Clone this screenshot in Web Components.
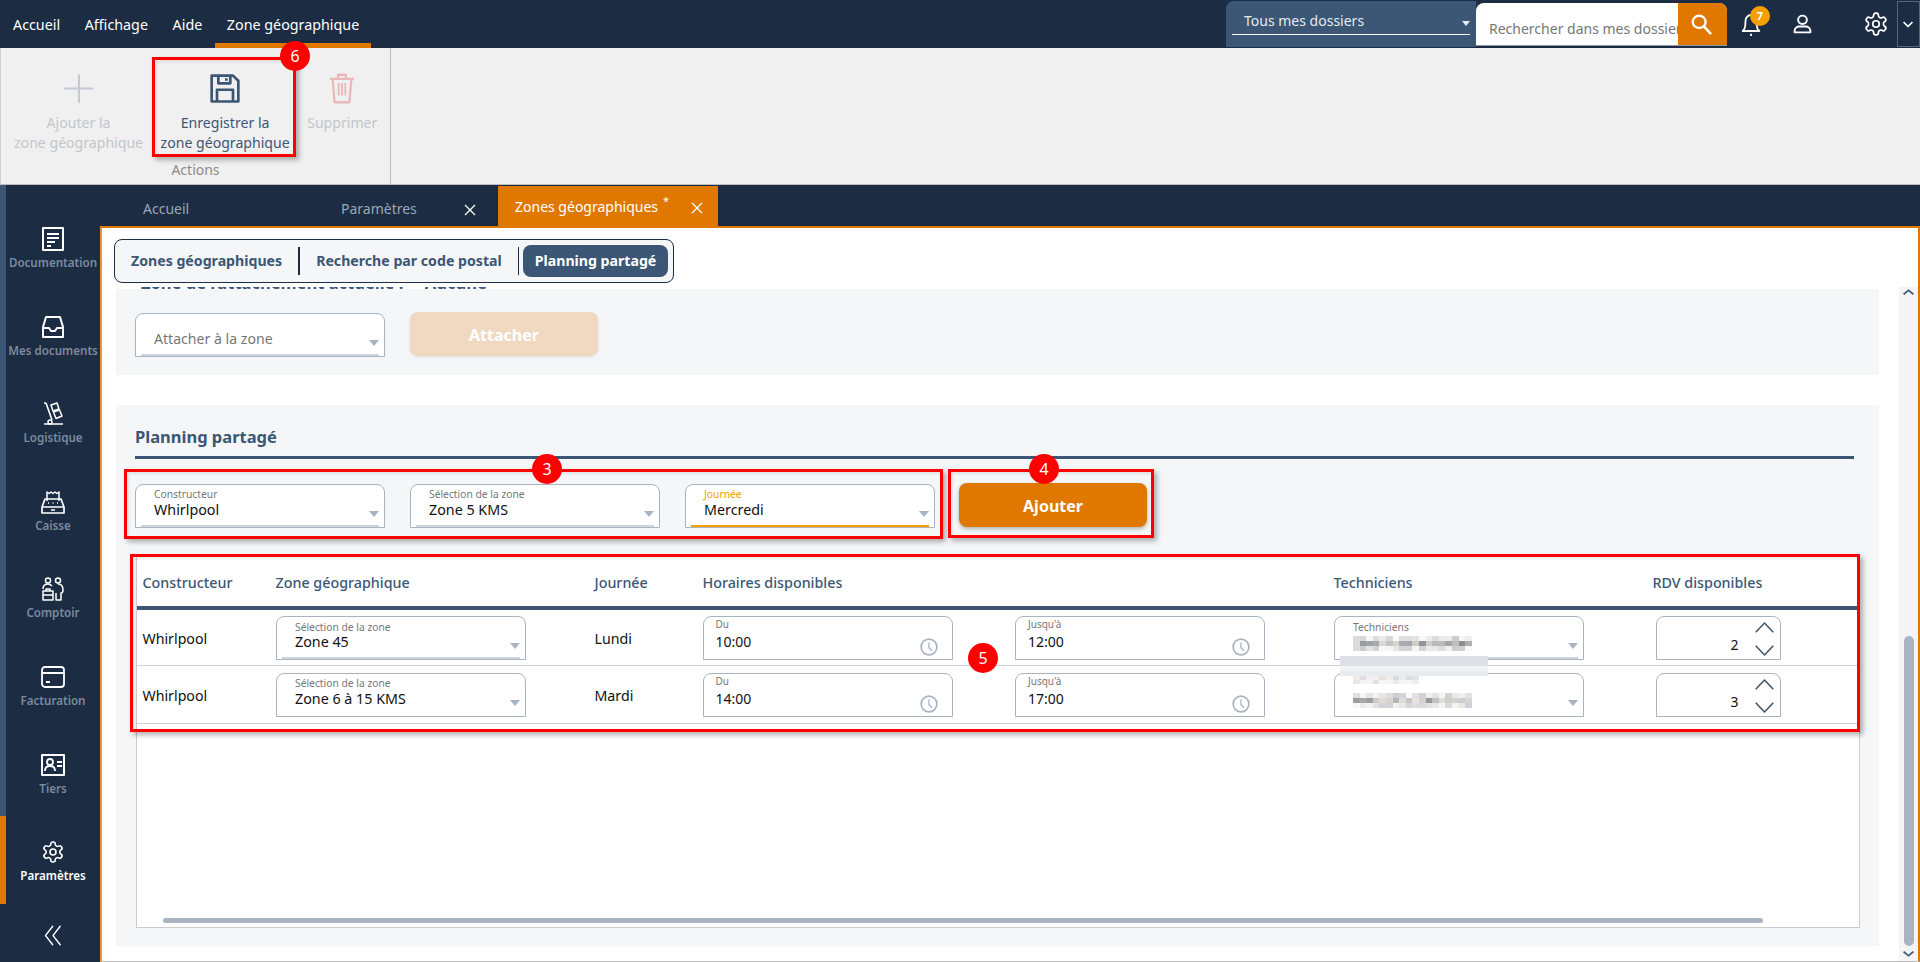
<!doctype html>
<html lang="fr">
<head>
<meta charset="utf-8">
<title>Zones géographiques</title>
<style>
  html, body { margin: 0; height: 100%; background: #fff; overflow: hidden; }
  body { font: 14px "Noto Sans", "Open Sans", sans-serif; color: #111; }
</style>
</head>
<body>
<app-shell>
  <app-topbar></app-topbar>
  <app-ribbon>
    <ribbon-action icon="plus" disabled>Ajouter la<br>zone géographique</ribbon-action>
    <ribbon-action icon="save">Enregistrer la<br>zone géographique</ribbon-action>
    <ribbon-action icon="trash" disabled>Supprimer</ribbon-action>
  </app-ribbon>
  <app-main>
    <side-nav slot="nav">
      <side-item icon="doc">Documentation</side-item>
      <side-item icon="inbox">Mes documents</side-item>
      <side-item icon="truck">Logistique</side-item>
      <side-item icon="till">Caisse</side-item>
      <side-item icon="people">Comptoir</side-item>
      <side-item icon="card">Facturation</side-item>
      <side-item icon="idcard">Tiers</side-item>
      <side-item icon="gear" active>Paramètres</side-item>
    </side-nav>
    <tab-strip slot="tabs"></tab-strip>
    <sub-tabs slot="subtabs"></sub-tabs>

    <gray-panel clip>
      <panel-row>
        <form-select placeholder="Attacher à la zone"></form-select>
        <action-button disabled>Attacher</action-button>
      </panel-row>
    </gray-panel>

    <gray-panel title="Planning partagé" tall>
      <panel-row spaced>
        <form-select label="Constructeur">Whirlpool</form-select>
        <form-select label="Sélection de la zone">Zone 5 KMS</form-select>
        <form-select label="Journée" active>Mercredi</form-select>
        <action-button>Ajouter</action-button>
      </panel-row>
      <planning-table>
        <planning-row header>
          <span>Constructeur</span><span>Zone géographique</span><span>Journée</span>
          <span>Horaires disponibles</span><span></span><span>Techniciens</span><span class="rdv">RDV disponibles</span>
        </planning-row>
        <planning-row top="6">
          <span>Whirlpool</span>
          <form-select label="Sélection de la zone" compact>Zone 45</form-select>
          <span>Lundi</span>
          <time-field label="Du">10:00</time-field>
          <time-field label="Jusqu'à">12:00</time-field>
          <form-select label="Techniciens" compact><blur-text seed="3"></blur-text></form-select>
          <spin-field>2</spin-field>
        </planning-row>
        <planning-row top="7">
          <span>Whirlpool</span>
          <form-select label="Sélection de la zone" compact plain>Zone 6 à 15 KMS</form-select>
          <span>Mardi</span>
          <time-field label="Du">14:00</time-field>
          <time-field label="Jusqu'à">17:00</time-field>
          <form-select compact plain><blur-text slot="label" seed="9" rows="2" cols="10" pale></blur-text><blur-text seed="5"></blur-text></form-select>
          <spin-field>3</spin-field>
        </planning-row>
      </planning-table>
    </gray-panel>
  </app-main>

  <blur-bars style="left:1340px;top:656px"></blur-bars>
  <note-box style="left:152px;top:57px;width:144px;height:100px"></note-box>
  <note-box style="left:124px;top:469px;width:819px;height:70px"></note-box>
  <note-box style="left:948px;top:469px;width:206px;height:69px"></note-box>
  <note-box style="left:130px;top:554px;width:1730px;height:178px"></note-box>
  <note-dot style="left:295px;top:56px">6</note-dot>
  <note-dot style="left:547px;top:469px">3</note-dot>
  <note-dot style="left:1044px;top:469px">4</note-dot>
  <note-dot style="left:983px;top:658px">5</note-dot>
</app-shell>

<script>
// icones dessinees a la main, viewBox 24x24 sauf indication
const ICONS = {
  plus: '<path d="M12 1v22M1 12h22" stroke-width="1.6"/>',
  save: '<path d="M2 2h16l4 4v16H2z" stroke-width="2"/><path d="M7 2v6h9V2M13 4v2M6 22v-9h12v9" stroke-width="2"/>',
  trash: '<path d="M3 5h18M9 5V2h6v3M5 5l1.4 17h11.2L19 5" stroke-width="1.7"/><path d="M9.5 8v9M12 8v9M14.5 8v9" stroke-width="1.4"/>',
  doc: '<path d="M2 1h20v22H2z" stroke-width="2"/><path d="M6 7h12M6 11h12M6 15h8M6 19h4" stroke-width="2"/>',
  inbox: '<path d="M5 2h14l3 10v10H2V12z" stroke-width="2"/><path d="M2 13h6l2 3h4l2-3h6" stroke-width="2"/>',
  truck: '<path d="M5 1l6 17" stroke-width="1.6"/><path d="M3 22h19M3 1h2" stroke-width="1.6"/><circle cx="9" cy="20" r="2" stroke-width="1.4"/><path d="M10 3l6-2 2 6-6 2zM12.500 10l6-2 2.500 6-6 2.500z" stroke-width="1.5"/>',
  till: '<path d="M6 11V2l2 1.500L10 2l2 1.500L14 2l2 1.500L18 2v9" stroke-width="1.5"/><path d="M4 9L1 17v6h22v-6l-3-8zM1 17h22" stroke-width="1.7"/><path d="M7 13h1M11.500 13h1M16 13h1M10 20h4" stroke-width="1.7"/>',
  people: '<circle cx="7" cy="3.500" r="2.500" stroke-width="1.5"/><circle cx="17" cy="3.500" r="2.500" stroke-width="1.500"/><path d="M2 12c0-3 2-5 5-5 2 0 3 1 4 2M17 7c3 0 5 2 5 6 0 2-1 3-2 3v7h-5v-7" stroke-width="1.500"/><path d="M2 14h10v9H2zM2 18h10M5 14v-2h4v2" stroke-width="1.500"/>',
  card: '<rect x="1" y="2" width="22" height="20" rx="3" stroke-width="1.800"/><path d="M1 8h22M5 17h4" stroke-width="1.800"/>',
  idcard: '<path d="M1 2h22v20H1z" stroke-width="2"/><circle cx="9" cy="9" r="3" stroke-width="1.800"/><path d="M4 18c0-3 2-5 5-5s5 2 5 5M16 9h5M16 13h5" stroke-width="1.800"/>',
  gear: '<path d="M12.220 2h-.44a2 2 0 0 0-2 2v.18a2 2 0 0 1-1 1.730l-.43.25a2 2 0 0 1-2 0l-.15-.08a2 2 0 0 0-2.730.73l-.22.38a2 2 0 0 0 .73 2.730l.15.1a2 2 0 0 1 1 1.720v.51a2 2 0 0 1-1 1.740l-.15.09a2 2 0 0 0-.73 2.730l.22.38a2 2 0 0 0 2.730.73l.15-.08a2 2 0 0 1 2 0l.43.25a2 2 0 0 1 1 1.730V20a2 2 0 0 0 2 2h.44a2 2 0 0 0 2-2v-.18a2 2 0 0 1 1-1.730l.43-.25a2 2 0 0 1 2 0l.15.08a2 2 0 0 0 2.730-.73l.22-.39a2 2 0 0 0-.73-2.730l-.15-.08a2 2 0 0 1-1-1.740v-.5a2 2 0 0 1 1-1.740l.15-.09a2 2 0 0 0 .73-2.730l-.22-.38a2 2 0 0 0-2.730-.73l-.15.08a2 2 0 0 1-2 0l-.43-.25a2 2 0 0 1-1-1.730V4a2 2 0 0 0-2-2z" stroke-width="1.600"/><circle cx="12" cy="12" r="3" stroke-width="1.600"/>',
  bell: '<path d="M12 3a6 6 0 0 0-6 6c0 6-1 9-3 10h18c-2-1-3-4-3-10a6 6 0 0 0-6-6z" stroke-width="2"/><path d="M11 23h2" stroke-width="2.400"/>',
  person: '<circle cx="12" cy="7" r="5" stroke-width="2.200"/><path d="M3 22v-2c0-3 3-5 5-5h8c2 0 5 2 5 5v2z" stroke-width="2.200"/>',
  search: '<circle cx="10" cy="9" r="7" stroke-width="2.600"/><path d="M15 14l8 9" stroke-width="2.800"/>',
  close: '<path d="M2 2l20 20M22 2L2 22" stroke-width="2.600"/>',
  clock: '<circle cx="12" cy="12" r="10.500" stroke-width="2.200"/><path d="M12 6v7l4 4" stroke-width="1.800"/>',
  up: '<path d="M2 17L12 6l10 11" stroke-width="1.800"/>',
  down: '<path d="M2 7l10 11L22 7" stroke-width="1.800"/>',
  chev: '<path d="M3 8l9 9 9-9" stroke-width="3.400"/>',
  rewind: '<path d="M12 2L2 12l10 10M22 2L12 12l10 10" stroke-width="1.800"/>'
};

// petite base : shadow root ouvert + style + markup
function define(name, css, html, extra) {
  const Base = class extends HTMLElement {
    constructor() {
      super();
      this.attachShadow({ mode: "open" }).innerHTML = `<style>${css}</style>${typeof html === "function" ? html(this) : html}`;
    }
    connectedCallback() { if (extra) extra(this); }
  };
  customElements.define(name, Base);
}

customElements.define("ui-icon", class extends HTMLElement {
  constructor() { super(); this.attachShadow({ mode: "open" }); }
  connectedCallback() {
    const s = this.getAttribute("size") || 24;
    const h = this.getAttribute("height") || s;
    this.shadowRoot.innerHTML = `<style>:host{display:inline-flex;color:inherit}svg{display:block;fill:none;stroke:currentColor;stroke-linejoin:round}</style>
      <svg width="${s}" height="${h}" viewBox="0 0 24 24" preserveAspectRatio="none">${ICONS[this.getAttribute("name")] || ""}</svg>`;
  }
});

define("app-shell", `:host{display:flex;flex-direction:column;position:relative;width:1920px;height:962px;overflow:hidden}`, `<slot></slot>`);

define("app-topbar", `
  :host{display:flex;height:48px;background:#1b2c43;color:#fff;padding-left:1px;box-sizing:border-box;flex:none}
  nav{display:flex;gap:.6px}
  a{padding:15px 12px 0;line-height:20px;box-sizing:border-box;height:48px;white-space:nowrap;font-size:14.300px}
  a.on{border-bottom:5px solid #e07800}
  .right{margin-left:auto;display:flex;height:47px}
  .scope{width:250px;margin-top:1px;background:#3c5675;border-radius:8px 0 0 0;padding:0 6px;box-sizing:border-box;position:relative}
  .scope div{margin-top:0;height:34px;padding:11px 0 0 12px;box-sizing:border-box;line-height:18px;border-bottom:1px solid #fff;font-size:14px;color:#e4e9ef}
  .scope i{position:absolute;right:6px;top:20px;border:4px solid transparent;border-top:5px solid #e8edf2;border-bottom:0}
  .search{display:flex;width:251px;height:43px;margin-top:3px;background:#fff;border-radius:8px 8px 0 0;overflow:hidden;border-bottom:1px solid #8a98aa;box-sizing:border-box}
  .search span{flex:1;overflow:hidden;white-space:nowrap;padding:16px 0 0 13px;color:#777;font-size:14px;line-height:20px}
  .search b{width:49px;background:#e07800;display:flex;align-items:center;justify-content:center;color:#fff;font-weight:400;padding-right:3px;box-sizing:border-box}
  .icons{display:flex;align-items:center;position:relative}
  .bell{margin-left:13px;position:relative;height:24px}
  .badge{position:absolute;left:10px;top:-6px;width:20px;height:20px;border-radius:50%;background:#f5a000;font:700 11px/20px "Noto Sans",sans-serif;text-align:center;color:#fff}
  .person{margin-left:29.500px}
  .gear{margin-left:50.500px}
  .more{margin-left:7.500px;width:23.500px;height:46px;margin-top:1px;border:1px solid #55657a;box-sizing:border-box;display:flex;align-items:center;justify-content:center}
`, `
  <nav><a>Accueil</a><a>Affichage</a><a>Aide</a><a class="on">Zone géographique</a></nav>
  <div class="right">
    <div class="scope"><div>Tous mes dossiers</div><i></i></div>
    <div class="search"><span>Rechercher dans mes dossiers</span><b><ui-icon name="search" size="22" height="21"></ui-icon></b></div>
    <div class="icons">
      <div class="bell"><ui-icon name="bell" size="22" height="24"></ui-icon><div class="badge">7</div></div>
      <ui-icon class="person" name="person" size="21" height="20"></ui-icon>
      <ui-icon class="gear" name="gear" size="26"></ui-icon>
      <div class="more"><ui-icon name="chev" size="12"></ui-icon></div>
    </div>
  </div>`);

define("app-ribbon", `
  :host{display:block;height:137px;flex:none;background:#f0f0f0;border-bottom:1px solid #bdbdbd;box-sizing:border-box}
  .group{width:391px;height:136px;border-right:1px solid #bdbdbd;box-sizing:border-box;display:flex;flex-direction:column;align-items:center;border-left:1px solid #d0d0d0}
  .row{display:flex;align-items:flex-start;gap:17.500px;padding:23px 0 0 0;height:90px;box-sizing:border-box;align-self:flex-start;margin-left:13px}
  .name{color:#8c8c8c;line-height:20px;margin-top:22px;font-size:14px}
`, `<div class="group"><div class="row"><slot></slot></div><div class="name">Actions</div></div>`);

define("ribbon-action", `
  :host{display:flex;flex-direction:column;align-items:center;text-align:center;line-height:19.500px;font-size:14.100px;color:#3c5675;white-space:nowrap}
  :host([disabled]){color:#c2c6cb}
  .ico{height:34px;flex:none;margin-bottom:8px;display:flex;align-items:center}
`, (el) => {
  const n = el.getAttribute("icon");
  const c = n === "plus" ? "#c3cad4" : n === "trash" ? "#e9b9b9" : "#3c5675";
  return `<div class="ico" style="color:${c}"><ui-icon name="${n}" size="32" height="${n === "trash" ? 33 : 31}"></ui-icon></div><div><slot></slot></div>`;
});

define("app-main", `
  :host{display:grid;grid-template-columns:100px 1fr;grid-template-rows:41px 1fr;flex:1;min-height:0;background:#1b2c43}
  ::slotted([slot=nav]){grid-row:1 / 3}
  .page{background:#fff;border:2px solid #e07800;border-bottom:1px solid #bbb;display:flex;flex-direction:column;min-height:0;border-left-color:#e8963a}
  .view{flex:1;display:flex;min-height:0;margin-top:4px}
  .flow{flex:1;padding-left:14px;min-width:0;display:flex;flex-direction:column}
`, `
  <slot name="nav"></slot>
  <slot name="tabs"></slot>
  <div class="page">
    <slot name="subtabs"></slot>
    <div class="view">
      <div class="flow"><slot></slot></div>
      <scroll-rail></scroll-rail>
    </div>
  </div>`);

define("side-nav", `
  :host{display:flex;flex-direction:column;background:#1b2c43}
  .top{height:18px;border-left:6px solid #3c5675}
  .less{flex:1;display:flex;align-items:center;justify-content:center;color:#fff;padding-left:6px;padding-top:5px}
`, `<div class="top"></div><slot></slot><div class="less"><ui-icon name="rewind" size="18" height="23"></ui-icon></div>`);

define("side-item", `
  :host{display:flex;flex-direction:column;align-items:center;height:87.6px;box-sizing:border-box;padding-top:23px;border-left:6px solid #3c5675;color:#fff}
  :host([active]){border-left-color:#e07800}
  .ico{height:26px;display:flex;align-items:center}
  .lbl{margin-top:3px;font-size:11.600px;line-height:16px;font-weight:600;color:#7b8a9d;white-space:nowrap}
  :host([active]) .lbl{color:#fff}
`, (el) => `<div class="ico"><ui-icon name="${el.getAttribute("icon")}" size="24"></ui-icon></div><div class="lbl"><slot></slot></div>`);

define("tab-strip", `
  :host{display:flex;background:#1b2c43;color:#9aa8b8;font-size:14px;line-height:20px}
  .t{height:41px;box-sizing:border-box;padding-top:14px;position:relative;white-space:nowrap}
  .a{width:225px;padding-left:43px}
  .b{width:173px;padding-left:16px;display:flex}
  .b ui-icon{margin:5px 0 0 47px;color:#fff}
  .c{width:220px;padding:11px 0 0 17px;background:#e07800;color:#fff;display:flex;margin-top:1px;height:40px}
  .c ui-icon{margin:5px 0 0 22px}
  sup{font-size:11px;line-height:0;margin-left:5px;position:relative;top:4px}
`, `<div class="t a">Accueil</div>
    <div class="t b">Paramètres<ui-icon name="close" size="12"></ui-icon></div>
    <div class="t c">Zones géographiques<sup>*</sup><ui-icon name="close" size="12"></ui-icon></div>`);

define("sub-tabs", `
  :host{display:flex;align-items:center;align-self:flex-start;margin:11px 0 0 12px;height:44px;width:560px;box-sizing:border-box;border:1px solid #1b2c43;border-radius:8px;background:#f4f6f8;font-weight:700;font-size:14.150px;color:#3c5675;white-space:nowrap;padding-bottom:1px}
  span{display:block}
  .a{margin-left:16px}
  .s1{width:2px;height:28px;background:#1b2c43;margin:0 16px}
  .s2{width:1px;height:28px;background:#1b2c43;margin:0 4px 0 16px}
  .on{background:#3c5675;color:#fff;border-radius:8px;height:32px;line-height:32px;padding:0 12px;margin-left:0}
`, `<span class="a">Zones géographiques</span><span class="s1"></span><span>Recherche par code postal</span><span class="s2"></span><span class="on">Planning partagé</span>`);

define("gray-panel", `
  :host{display:block;background:#f4f6f8;width:1763px;box-sizing:border-box;padding:0 20px 0 19px;flex:none}
  :host([clip]){height:88px;overflow:hidden;background:linear-gradient(#fff 2px,#f4f6f8 2px)}
  :host([tall]){height:541px;margin-top:30px}
  .cut{font-weight:700;font-size:16.500px;line-height:22px;color:#3c5675;margin-top:-15px;padding-left:6px;height:41px;white-space:nowrap}
  h2{margin:0;font-size:16.500px;line-height:22px;font-weight:700;color:#3c5675;padding-top:21px;padding-bottom:8px;border-bottom:3px solid #3c5675;margin-right:5px}
`, (el) => el.hasAttribute("clip")
  ? `<div class="cut">Zone de rattachement actuelle :&nbsp;&nbsp;&nbsp;&nbsp;&nbsp;Aucune</div><slot></slot>`
  : `<h2>${el.getAttribute("title")}</h2><slot></slot>`);

define("panel-row", `
  :host{display:flex;gap:25px;align-items:flex-start}
  :host([spaced]){margin-top:25px}
`, `<slot></slot>`);

define("form-select", `
  :host{display:block;position:relative;width:250px;height:44px;box-sizing:border-box;background:#fff;border:1px solid #a9b4c2;border-radius:8px 8px 0 0;flex:none}
  .label{position:absolute;left:18px;top:2px;font-size:10.300px;line-height:14px;color:#777;white-space:nowrap}
  :host([active]) .label{color:#f5a000}
  :host([compact]) .label{top:3px;left:18.500px}
  :host([compact][plain]) .label{top:2px}
  .value{position:absolute;left:18px;top:15px;right:30px;font-size:14.300px;line-height:20px;color:#111;white-space:nowrap}
  :host([compact]) .value{left:18.500px}
  .ph{position:absolute;left:18px;top:15px;font-size:14.100px;line-height:20px;color:#777}
  i{position:absolute;right:5px;top:26px;border:5px solid transparent;border-top:6px solid #a9b4c2;border-bottom:0}
  .line{position:absolute;left:5px;right:5px;bottom:0;height:2px;background:#ced4dd}
  :host([active]) .line{background:#f5a000}
  :host([plain]) .line{display:none}
`, (el) => {
  const ph = el.getAttribute("placeholder");
  const lbl = el.getAttribute("label") || "";
  return (ph ? `<div class="ph">${ph}</div>` : `<div class="label"><slot name="label">${lbl}</slot></div><div class="value"><slot></slot></div>`) + `<i></i><div class="line"></div>`;
});

define("action-button", `
  :host{display:flex;align-items:center;justify-content:center;width:188px;height:44px;border-radius:8px;background:#e07800;color:#fff;font-weight:700;font-size:16px;box-shadow:0 2px 4px rgba(0,0,0,.28);margin:-1px 0 0 -1px;flex:none;padding-top:2px;box-sizing:border-box}
  :host([disabled]){background:#f0d9c0;box-shadow:0 1px 3px rgba(0,0,0,.1);margin-left:0}
`, `<slot></slot>`);

define("planning-table", `
  :host{display:block;position:relative;width:1724px;height:372px;box-sizing:border-box;margin:28px 0 0 1px;background:#fff;border:1px solid #ccc}
  .bar{position:absolute;left:26px;right:96px;bottom:4px;height:5px;border-radius:3px;background:#a9b4c2}
`, `<slot></slot><div class="bar"></div>`);

define("planning-row", `
  :host{display:grid;grid-template-columns:133px 319px 108px 312.500px 318.500px 322px 1fr;padding-left:5.500px;box-sizing:border-box;align-items:start;border-bottom:1px solid #cfd2d6;color:#111;font-size:14.200px}
  :host([header]){height:53px;border-bottom:4px solid #3c5675;color:#3c5675;font-weight:500;align-items:center;padding-top:2px;font-size:14.300px}
  ::slotted(span){white-space:nowrap}
  ::slotted(.rdv){margin-left:-3px}
`, `<slot></slot>`, (el) => {
  const t = el.getAttribute("top");
  if (!t) return;
  el.style.paddingTop = t + "px";
  el.style.height = (t === "6" ? 56 : 58) + "px";
  for (const c of el.children) if (c.tagName === "SPAN") { c.style.lineHeight = "20px"; c.style.marginTop = "13px"; }
});

define("time-field", `
  :host{display:block;position:relative;width:250px;height:44px;box-sizing:border-box;background:#fff;border:1px solid #a9b4c2;border-radius:8px 8px 0 0}
  .label{position:absolute;left:12px;top:0;font-size:10px;line-height:14px;color:#777}
  .value{position:absolute;left:12px;top:15px;font-size:14px;line-height:20px;color:#111}
  ui-icon{position:absolute;right:14px;top:21px;color:#a9b4c2}
`, (el) => `<div class="label">${el.getAttribute("label")}</div><div class="value"><slot></slot></div><ui-icon name="clock" size="18"></ui-icon>`);

define("spin-field", `
  :host{display:block;position:relative;width:125px;height:44px;box-sizing:border-box;background:#fff;border:1px solid #a9b4c2;border-radius:8px 8px 0 0;margin-left:0}
  .value{position:absolute;right:41px;top:18px;font-size:14px;line-height:20px;color:#111}
  .u{position:absolute;right:5px;top:1px;color:#44586f}
  .d{position:absolute;right:5px;top:23px;color:#44586f}
`, `<div class="value"><slot></slot></div><ui-icon class="u" name="up" size="21" height="20"></ui-icon><ui-icon class="d" name="down" size="21" height="20"></ui-icon>`);

// zone floutee du reference : mosaique de cellules
customElements.define("blur-text", class extends HTMLElement {
  constructor() { super(); this.attachShadow({ mode: "open" }); }
  connectedCallback() {
    let s = +this.getAttribute("seed") || 1;
    const rows = +this.getAttribute("rows") || 3, cols = +this.getAttribute("cols") || 18;
    const pale = this.hasAttribute("pale");
    let cells = "";
    for (let i = 0; i < rows * cols; i++) {
      s = (s * 9301 + 49297) % 233280;
      const r = s / 233280, mid = Math.floor(i / cols) === 1;
      const v = pale ? 215 + r * 35 : mid ? 140 + r * 90 : 205 + r * 45;
      cells += `<b style="background:rgb(${v + 8 * (r - .5)},${v},${v + 10 * (.5 - r)})"></b>`;
    }
    this.shadowRoot.innerHTML = `<style>:host{display:block;width:${cols * 6.6}px}
      div{display:grid;grid-template-columns:repeat(${cols},6.6px);grid-auto-rows:${pale ? 4 : 5}px}</style><div>${cells}</div>`;
    if (!pale) this.style.marginTop = "4px";
  }
});

define("blur-bars", `
  :host{position:absolute;display:block;width:148px;height:20px;background:linear-gradient(#dde0e6 0 10px,#f2f3f4 10px 15px,#e9ecef 15px 20px)}
`, ``);

define("note-box", `
  :host{position:absolute;box-sizing:border-box;border:3px solid #f00;box-shadow:3px 3px 5px rgba(0,0,0,.3),inset 2px 2px 3px rgba(0,0,0,.08);pointer-events:none}
`, ``);

define("note-dot", `
  :host{position:absolute;width:30px;height:30px;margin:-15px 0 0 -15px;border-radius:50%;background:#f00;color:#fff;font:16px/30px "Noto Sans",sans-serif;text-align:center}
`, `<slot></slot>`);

define("scroll-rail", `
  :host{display:flex;flex-direction:column;align-items:center;width:19px;background:#f4f4f4;flex:none;color:#3c5675;margin-left:20px}
  .top{padding-top:4px}
  .grow{flex:1}
  .thumb{width:10px;height:310px;border-radius:5px;background:#a9b4c2}
  .bot{height:15px;display:flex;align-items:center}
`, `<ui-icon class="top" name="chev" size="13" height="11" style="transform:scaleY(-1)"></ui-icon><div class="grow"></div><div class="thumb"></div><div class="bot"><ui-icon name="chev" size="13" height="11"></ui-icon></div>`);
</script>
</body>
</html>
